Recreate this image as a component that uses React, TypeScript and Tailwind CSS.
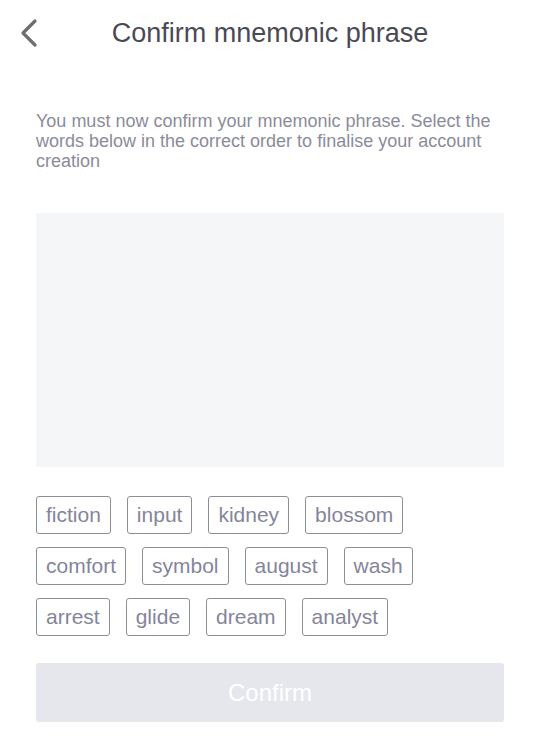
import React from "react";

const words = [
  "fiction", "input", "kidney", "blossom",
  "comfort", "symbol", "august", "wash",
  "arrest", "glide", "dream", "analyst",
];

export default function App() {
  return (
    <div
      className="w-[537px] h-[740px] bg-white relative"
      style={{ fontFamily: '"Liberation Sans", Arial, sans-serif' }}
    >
      <div className="relative h-[66px] flex items-center justify-center">
        <button className="absolute left-[17px] top-[17px] w-[24px] h-[32px] flex items-center justify-center">
          <svg width="22" height="30" viewBox="0 0 22 30" fill="none">
            <path d="M17 3 L5 15 L17 27" stroke="#6e6e72" strokeWidth="3.2" strokeLinecap="round" strokeLinejoin="round" />
          </svg>
        </button>
        <h1 className="ml-[3px] text-[27px] leading-[30px] text-[#4a4a55] font-normal">Confirm mnemonic phrase</h1>
      </div>

      <div className="pl-[36px] pr-[33px]">
        <p className="mt-[45px] text-[18px] leading-[20px] text-[#8b8b9a]">
          You must now confirm your mnemonic phrase. Select the words below in the correct order to finalise your account creation
        </p>

        <div className="mt-[42px] h-[254px] bg-[#f5f6f8]" />

        <div className="mt-[29px] flex flex-wrap">
          {words.map((w) => (
            <div
              key={w}
              className="h-[38px] mr-[16px] mb-[13px] px-[9px] flex items-center border border-[#8e8e98] rounded-[3px] text-[21px] text-[#85859a]"
            >
              {w}
            </div>
          ))}
        </div>

        <button className="mt-[14px] w-full h-[59px] rounded-[3px] bg-[#e6e7ec] text-white text-[24px] flex items-center justify-center">
          Confirm
        </button>
      </div>
    </div>
  );
}
